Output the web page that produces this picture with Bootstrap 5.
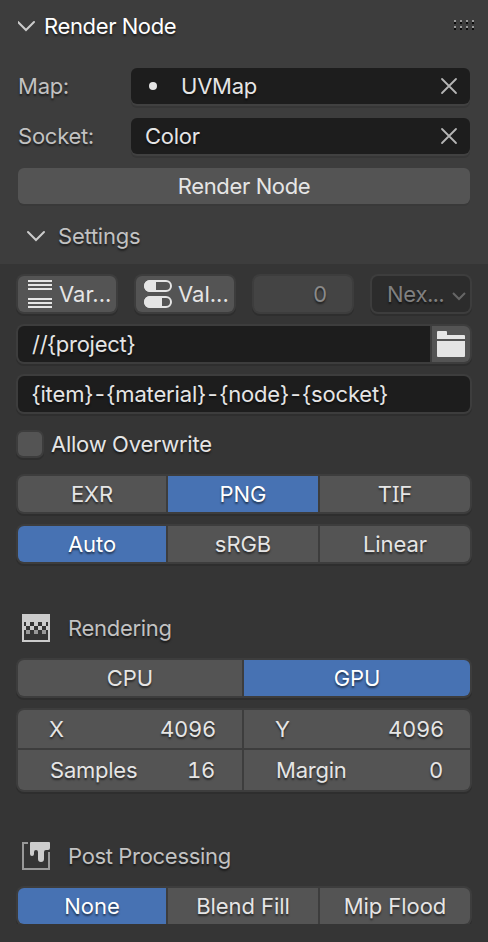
<!DOCTYPE html>
<html lang="en">
<head>
<meta charset="utf-8">
<meta name="viewport" content="width=device-width, initial-scale=1">
<title>Render Node</title>
<link href="https://cdn.jsdelivr.net/npm/bootstrap@5.3.0/dist/css/bootstrap.min.css" rel="stylesheet">
<style>
body{background:#353535;color:#e5e5e5;font:400 22px/36px Inter,sans-serif;font-feature-settings:"tnum" 1;letter-spacing:-.24px;text-shadow:0 2px 2px rgba(0,0,0,.55);white-space:nowrap;overflow:hidden}
svg{display:block;flex:none}
.panel-top{background:#3d3d3d;height:264px;padding:0 18px}
.panel-title{height:52px;color:#fff;letter-spacing:-.36px}
.panel-rows{padding-top:16px}
.soft{color:#c2c2c2}
.field-label{width:113px;color:#c2c2c2}
.ctl{height:36px;border-radius:6px;min-width:0}
.dark-field{background:#1d1d1d}
.panel-top .ctl{box-shadow:0 2px 0 0 #393939}
.panel-top .dark-field{box-shadow:0 2px 0 0 #414141,0 4px 0 0 #373737}
.gray-field,.btn.gray-field{background:#545454}
.btn.ctl{padding:0;border:0;color:#e5e5e5;font-size:22px;line-height:36px}
.panel-top .btn.ctl{letter-spacing:-.36px}
.panel-body{padding:12px 18px 0}
.panel-body .ctl,.seg,.tick{box-shadow:0 0 0 2px #3d3d3d,0 2px 0 2px #2e2e2e}
.four-up{display:grid;grid-template-columns:repeat(4,98px);gap:20px;height:36px}
.num-off{background:#444;color:#8a8a8a;padding-right:25px}
.menu-off{background:#2c2c2c;color:#808080}
.template{letter-spacing:-.15px}
.seg{display:grid;gap:2px;background:#3d3d3d;border-radius:6px;overflow:visible}
.seg>*{text-align:center;background:#545454;color:#e5e5e5;border:0;padding:0;height:36px;line-height:36px;font-size:22px;border-radius:0}
.seg>button{letter-spacing:-.06px;text-shadow:0 2px 2px rgba(0,0,0,.55)}
.seg>*:first-child{border-radius:6px 0 0 6px}
.seg>*:last-child{border-radius:0 6px 6px 0}
.three{grid-template-columns:148px 150px 150px}
.two{grid-template-columns:224px 226px}
.seg>.on{background:#4772b3;color:#fff}
.nums>*{display:flex;justify-content:space-between;padding:0 26px 0 31px;height:38px;line-height:39px}
.nums>.tall{height:40px;line-height:41px;padding:0 27px 0 32px}
.nums>*:nth-child(1){border-radius:6px 0 0 0}
.nums>*:nth-child(2){border-radius:0 6px 0 0}
.nums>*:nth-child(3){border-radius:0 0 0 6px}
.nums>*:nth-child(4){border-radius:0 0 6px 0}
.path-row{border-radius:6px;overflow:hidden;gap:2px;background:#3d3d3d}
.tick{width:24px;height:24px;border-radius:5px;background:#545454}
.mt14{margin-top:14px}
.sect{margin-top:52px;height:28px;padding-left:4px;gap:18px;line-height:28px;color:#c2c2c2;letter-spacing:-.3px}
.after-sect{margin-top:18px}
.tick-label{margin-left:9px}
.slab-i{font-family:"Noto Sans",sans-serif;line-height:1}
</style>
<script src="https://cdn.jsdelivr.net/npm/bootstrap@5.3.0/dist/js/bootstrap.bundle.min.js"></script>
</head>
<body>
<header class="panel-top">
  <div class="panel-title d-flex align-items-center">
    <svg width="26" height="20" viewBox="0 0 26 20"><path d="M0 6l8 8 8-8" fill="none" stroke="#ccc" stroke-width="2" stroke-linecap="round"/></svg>
    <span class="flex-grow-1">Render Node</span>
    <svg width="16" height="12" viewBox="0 0 16 12" overflow="visible" shape-rendering="crispEdges"><path d="M0 0h2v2h-2zm6 0h2v2h-2zm6 0h2v2h-2zm6 0h2v2h-2zM0 6h2v2h-2zm6 0h2v2h-2zm6 0h2v2h-2zm6 0h2v2h-2z" fill="#999"/><path d="M0 2h2v2h-2zm6 0h2v2h-2zm6 0h2v2h-2zm6 0h2v2h-2zM0 8h2v2h-2zm6 0h2v2h-2zm6 0h2v2h-2zm6 0h2v2h-2z" fill="#0c0c0c"/></svg>
  </div>
  <div class="panel-rows">
    <div class="d-flex">
      <span class="field-label">Map:</span>
      <div class="ctl dark-field flex-grow-1 d-flex align-items-center">
        <svg width="50" height="36"><circle cx="22" cy="18" r="4" fill="#e5e5e5"/></svg>
        <span class="flex-grow-1">UVMap</span>
        <svg width="30" height="36"><path d="M2 11l14 14M16 11L2 25" stroke="#b5b5b5" stroke-width="1.8" stroke-linecap="round"/></svg>
      </div>
    </div>
    <div class="d-flex mt14">
      <span class="field-label">Socket:</span>
      <div class="ctl dark-field flex-grow-1 d-flex align-items-center">
        <svg width="14" height="36"></svg>
        <span class="flex-grow-1">Color</span>
        <svg width="30" height="36"><path d="M2 11l14 14M16 11L2 25" stroke="#b5b5b5" stroke-width="1.8" stroke-linecap="round"/></svg>
      </div>
    </div>
    <button class="btn ctl gray-field w-100 d-block mt14">Render Node</button>
    <div class="d-flex align-items-center mt14 soft">
      <svg width="40" height="20" viewBox="0 0 40 20"><path d="M10 6l8 8 8-8" fill="none" stroke="#ccc" stroke-width="2" stroke-linecap="round"/></svg>
      <span>Settings</span>
    </div>
  </div>
</header>
<main class="panel-body">
  <div class="four-up">
    <button class="btn ctl gray-field d-flex"><svg width="41" height="36" shape-rendering="crispEdges"><path d="M10 4h24v2h-24zm0 4h24v2h-24zm0 4h24v2h-24zm0 10h24v2h-24zm0 4h24v2h-24zm0 4h24v2h-24z" fill="#e5e5e5"/></svg>Var...</button>
    <button class="btn ctl gray-field d-flex"><svg width="42" height="36"><g fill="none" stroke="#e5e5e5" stroke-width="2"><rect x="9" y="5" width="26" height="10" rx="5"/><rect x="9" y="21" width="26" height="10" rx="5"/></g><path d="M14 4h6v12h-6a6 6 0 0 1 0-12zM14 20h12v12h-12a6 6 0 0 1 0-12z" fill="#e5e5e5"/></svg>Val...</button>
    <div class="ctl num-off text-end">0</div>
    <div class="ctl menu-off d-flex"><svg width="15" height="36"></svg><span class="flex-grow-1">Nex...</span><svg width="19" height="36"><path d="M2 17l6 6 6-6" fill="none" stroke="#666" stroke-width="2"/></svg></div>
  </div>
  <div class="ctl path-row d-flex mt14">
    <div class="dark-field flex-grow-1"><svg class="float-start" width="14" height="36"></svg>//{project}</div>
    <div class="gray-field"><svg width="38" height="36"><path d="M5 6q0-1 1-1h8q1 0 1 1v3h17q1 0 1 1v3H5zM5 15h28v15q0 1-1 1H6q-1 0-1-1z" fill="#e5e5e5"/></svg></div>
  </div>
  <div class="ctl dark-field template mt14"><svg class="float-start" width="14" height="36"></svg>{item}-{material}-{node}-{socket}</div>
  <div class="d-flex align-items-center mt14"><span class="tick"></span><span class="tick-label">Allow Overwrite</span></div>
  <div class="seg three mt14"><button>EXR</button><button class="on">PNG</button><button>T<span class="slab-i">I</span>F</button></div>
  <div class="seg three mt14"><button class="on">Auto</button><button>sRGB</button><button>Linear</button></div>
  <div class="sect d-flex align-items-center">
    <svg width="28" height="28" shape-rendering="crispEdges"><path fill-rule="evenodd" d="M0 0h28v28H0zM2 8h24v18H2z" fill="#ccc"/><path d="M4 8h4v4h-4zm8 0h4v4h-4zm8 0h4v4h-4zM2 12h2v4h-2zm6 0h4v4h-4zm8 0h4v4h-4zm8 0h2v4h-2z" fill="#ccc"/><path d="M4 16h4v4h-4zm8 0h4v4h-4zm8 0h4v4h-4z" fill="#999"/></svg>
    <span>Rendering</span>
  </div>
  <div class="seg two after-sect"><button>CPU</button><button class="on">GPU</button></div>
  <div class="seg two nums mt14">
    <div><span>X</span><span>4096</span></div><div><span>Y</span><span>4096</span></div>
    <div class="tall"><span>Samples</span><span>16</span></div><div class="tall"><span>Margin</span><span>0</span></div>
  </div>
  <div class="sect d-flex align-items-center">
    <svg width="28" height="28"><path d="M6 1H1v26h26V10" fill="none" stroke="#999" stroke-width="2"/><path d="M8 1q0-1 1-1h18q1 0 1 1v5q0 2-2 2h-2q-2 0-2 2v7q0 3-3 3t-3-3v-7q0-2-2-2t-2 2v2q0 2-2 2t-2-2z" fill="#ccc"/></svg>
    <span>Post Processing</span>
  </div>
  <div class="seg three after-sect"><button class="on">None</button><button>Blend Fill</button><button>Mip Flood</button></div>
</main>
</body>
</html>
